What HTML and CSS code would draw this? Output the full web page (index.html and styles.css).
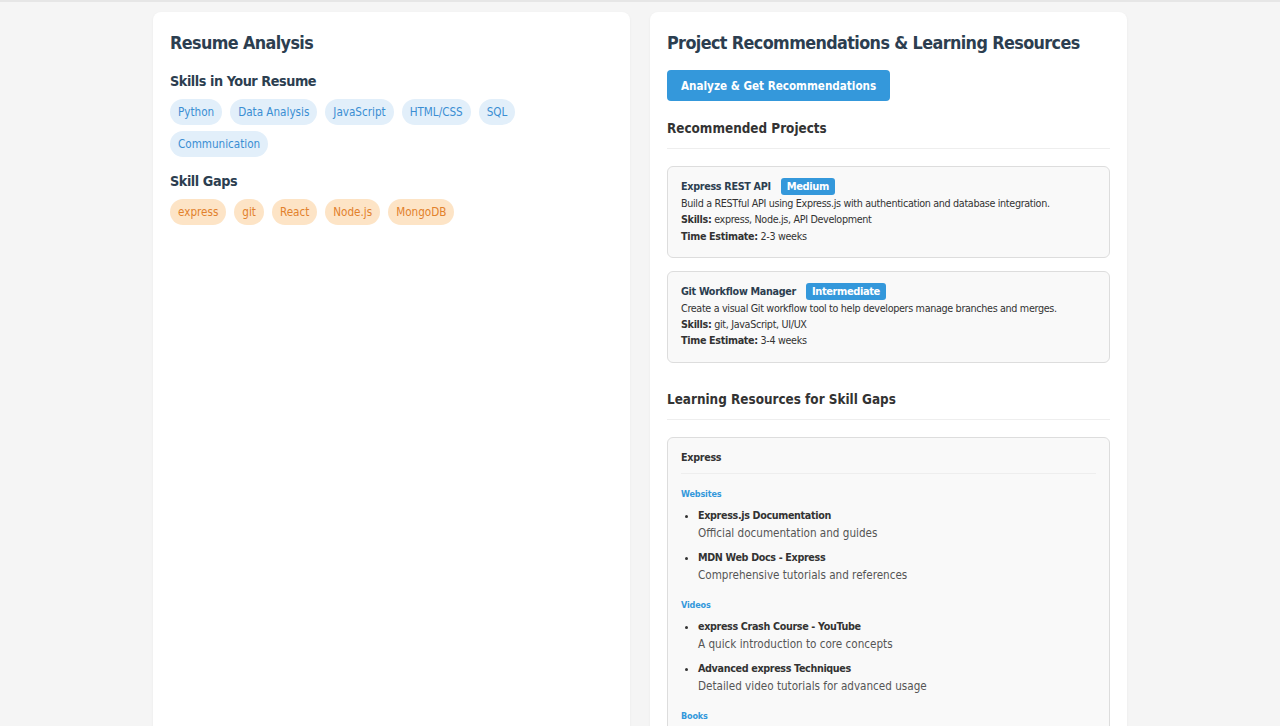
FILE: index.html
```html
<!DOCTYPE html>
<html>
<head>
<meta charset="utf-8">
<link rel="stylesheet" href="styles.css">
</head>
<body>
<div class="topline"></div>
<main class="layout">
  <section class="card">
    <h2 class="title">Resume Analysis</h2>
    <h3 class="subtitle">Skills in Your Resume</h3>
    <div class="tags">
      <span class="tag have">Python</span>
      <span class="tag have">Data Analysis</span>
      <span class="tag have">JavaScript</span>
      <span class="tag have">HTML/CSS</span>
      <span class="tag have">SQL</span>
      <span class="tag have">Communication</span>
    </div>
    <h3 class="subtitle gaps">Skill Gaps</h3>
    <div class="tags">
      <span class="tag gap">express</span>
      <span class="tag gap">git</span>
      <span class="tag gap">React</span>
      <span class="tag gap">Node.js</span>
      <span class="tag gap">MongoDB</span>
    </div>
  </section>
  <section class="card">
    <h2 class="title">Project Recommendations &amp; Learning Resources</h2>
    <button class="btn">Analyze &amp; Get Recommendations</button>
    <h4 class="section-head">Recommended Projects</h4>
    <div class="project">
      <div class="proj-title">Express REST API <span class="badge">Medium</span></div>
      <p class="line">Build a RESTful API using Express.js with authentication and database integration.</p>
      <p class="line"><b>Skills:</b> express, Node.js, API Development</p>
      <p class="line"><b>Time Estimate:</b> 2-3 weeks</p>
    </div>
    <div class="project">
      <div class="proj-title">Git Workflow Manager <span class="badge">Intermediate</span></div>
      <p class="line">Create a visual Git workflow tool to help developers manage branches and merges.</p>
      <p class="line"><b>Skills:</b> git, JavaScript, UI/UX</p>
      <p class="line"><b>Time Estimate:</b> 3-4 weeks</p>
    </div>
    <h4 class="section-head learn">Learning Resources for Skill Gaps</h4>
    <div class="resource">
      <div class="res-title">Express</div>
      <div class="res-cat">Websites</div>
      <ul class="res-list">
        <li><b>Express.js Documentation</b><span>Official documentation and guides</span></li>
        <li><b>MDN Web Docs - Express</b><span>Comprehensive tutorials and references</span></li>
      </ul>
      <div class="res-cat">Videos</div>
      <ul class="res-list">
        <li><b>express Crash Course - YouTube</b><span>A quick introduction to core concepts</span></li>
        <li><b>Advanced express Techniques</b><span>Detailed video tutorials for advanced usage</span></li>
      </ul>
      <div class="res-cat">Books</div>
    </div>
  </section>
</main>
</body>
</html>
```
FILE: styles.css
```css
* { box-sizing: border-box; }
html, body { margin: 0; padding: 0; }
body {
  background: #f5f5f5;
  font-family: "DejaVu Sans Condensed", "DejaVu Sans", sans-serif;
  color: #333;
}
.topline { height: 2px; background: #e6e6e6; }
.layout {
  width: 974px;
  margin: 10px auto 0;
  display: grid;
  grid-template-columns: 1fr 1fr;
  gap: 20px;
  align-items: start;
}
.card {
  background: #fff;
  border-radius: 8px;
  box-shadow: 0 1px 3px rgba(0,0,0,0.05);
  padding: 17px 17px 40px;
  min-height: 760px;
}
.title {
  margin: 0;
  font-size: 17.8px;
  letter-spacing: -0.6px;
  font-weight: bold;
  color: #2c3e50;
  line-height: 28px;
}
.subtitle {
  margin: 14px 0 8px;
  font-size: 14.3px;
  letter-spacing: -0.45px;
  font-weight: bold;
  color: #2c3e50;
  line-height: 20px;
}
.subtitle.gaps { margin-top: 14px; }
.tags { display: flex; flex-wrap: wrap; gap: 6px 8px; }
.tag {
  display: inline-block;
  height: 26px;
  line-height: 26px;
  padding: 0 8px;
  border-radius: 13px;
  font-size: 11.6px;
  letter-spacing: 0;
}
.tag.have { background: #e2effa; color: #3a8ed3; }
.tag.gap { background: #fde4c6; color: #e2812c; }
.btn {
  display: block;
  margin-top: 13px;
  background: #3498db;
  color: #fff;
  border: 0;
  border-radius: 4px;
  height: 31px;
  padding: 0 14px;
  font-family: inherit;
  font-size: 11.6px;
  letter-spacing: 0;
  font-weight: bold;
  cursor: pointer;
}
.section-head {
  margin: 19px 0 17px;
  padding-bottom: 10px;
  border-bottom: 1px solid #eee;
  font-size: 13.4px;
  letter-spacing: 0;
  font-weight: bold;
  color: #333;
  line-height: 18px;
}
.section-head.learn { margin-top: 28px; }
.project {
  background: #f9f9f9;
  border: 1px solid #ddd;
  border-radius: 6px;
  padding: 11px 13px 12px;
  margin-bottom: 13px;
}
.proj-title {
  font-size: 10.7px;
  letter-spacing: -0.3px;
  font-weight: bold;
  color: #2c3e50;
  line-height: 18px;
}
.badge {
  display: inline-block;
  margin-left: 7px;
  background: #3498db;
  color: #fff;
  font-size: 11px;
  letter-spacing: -0.4px;
  font-weight: bold;
  padding: 0 6px;
  border-radius: 3px;
  line-height: 17px;
}
.line {
  margin: 0;
  font-size: 10.7px;
  letter-spacing: -0.33px;
  line-height: 16.3px;
  color: #333;
}
.resource {
  background: #f9f9f9;
  border: 1px solid #ddd;
  border-radius: 6px;
  padding: 12px 13px 40px;
}
.res-title {
  font-size: 10.7px;
  letter-spacing: -0.3px;
  font-weight: bold;
  color: #333;
  line-height: 16px;
  padding-bottom: 7px;
  border-bottom: 1px solid #eee;
  margin-bottom: 14px;
}
.res-cat {
  font-size: 9px;
  letter-spacing: -0.15px;
  font-weight: bold;
  color: #3498db;
  line-height: 12px;
  margin: 14px 0 8px;
}
.res-title + .res-cat { margin-top: 0; }
.res-list { margin: 0; padding-left: 17px; }
.res-list li { margin-bottom: 7px; font-size: 10.7px; line-height: 16px; color: #333; }
.res-list li b { display: block; color: #333; font-size: 10.7px; letter-spacing: -0.35px; line-height: 16px; }
.res-list li span { display: block; color: #555; font-size: 11.6px; line-height: 19px; }
```
